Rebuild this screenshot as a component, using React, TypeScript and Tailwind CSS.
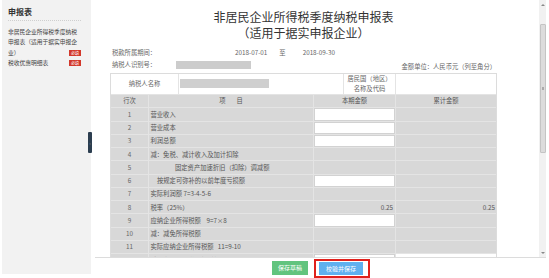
import React from "react";

type Row = { n: string; t: string; a: "w" | "g"; b?: "w" | "g"; v?: string; ind?: string };

const rows: Row[] = [
  { n: "1", t: "营业收入", a: "w" },
  { n: "2", t: "营业成本", a: "w" },
  { n: "3", t: "利润总额", a: "w" },
  { n: "4", t: "减：免税、减计收入及加计扣除", a: "g" },
  { n: "5", t: "固定资产加速折旧（扣除）调减额", a: "g", ind: "pl-[26px]" },
  { n: "6", t: "按规定可弥补的以前年度亏损额", a: "w", ind: "pl-[8px]" },
  { n: "7", t: "实际利润额 7=3-4-5-6", a: "g" },
  { n: "8", t: "税率（25%）", a: "g", v: "0.25" },
  { n: "9", t: "应纳企业所得税额\u00a0\u00a0\u00a0 9=7×8", a: "w" },
  { n: "10", t: "减：减免所得税额", a: "g" },
  { n: "11", t: "实际应纳企业所得税额\u00a0\u00a0 11=9-10", a: "g" },
  { n: "12", t: "减：实际已预缴所得税额", a: "w", b: "w" },
];

function Tag() {
  return (
    <span className="w-[12px] h-[6px] bg-[#d2382b] text-white text-[4px] leading-[6px] flex items-center justify-center shrink-0">
      必填
    </span>
  );
}

export default function App() {
  return (
    <div className="w-[549px] h-[278px] bg-white flex overflow-hidden relative font-['Noto_Sans_CJK_SC','Noto_Sans',sans-serif]">
      {/* Sidebar */}
      <div className="ml-[2px] w-[89px] h-[274px] bg-[#f2f2f2] pl-[6px] pr-[10px] pt-[7px] shrink-0">
        <div className="text-[8px] font-bold text-[#333] leading-[10px]">申报表</div>
        <div className="mt-[3px] border-t border-dotted border-[#cfcfcf]" />
        <div className="mt-[6px] text-[5.75px] leading-[10.4px] text-[#444]">
          <div className="whitespace-nowrap">非居民企业所得税季度纳税</div>
          <div className="whitespace-nowrap">申报表（适用于据实申报企</div>
          <div className="flex items-center justify-between">
            <span>业）</span>
            <Tag />
          </div>
          <div className="flex items-center justify-between">
            <span>税收优惠明细表</span>
            <Tag />
          </div>
        </div>
      </div>

      {/* collapse handle */}
      <div className="absolute left-[88px] top-[132px] w-[4px] h-[21px] bg-[#2c3e50] rounded-[1px] flex items-center justify-center">
        <span className="text-[4px] leading-none text-[#9fb0c0]">‹</span>
      </div>

      {/* Main */}
      <div className="ml-[4px] w-[451px] flex flex-col">
        <div className="h-[258px] flex border-b border-[#dcdcdc]">
          <div className="w-[444px] h-[257px] overflow-hidden pl-[15px]">
            <div className="w-[387px] pt-[9px]">
              <div className="text-center text-[12px] leading-[16px] text-[#333]">
                非居民企业所得税季度纳税申报表
              </div>
              <div className="text-center text-[12px] leading-[16px] text-[#333]">
                （适用于据实申报企业）
              </div>

              <div className="mt-[6px] h-[12px] flex items-center text-[6.3px] text-[#666] pl-[2px]">
                <span className="w-[123px]">税款所属期间：</span>
                <span>2018-07-01</span>
                <span className="ml-[12px]">至</span>
                <span className="ml-[17px]">2018-09-30</span>
              </div>
              <div className="h-[12px] flex items-center justify-between text-[6.3px] text-[#666] pl-[2px] pr-[1px]">
                <div className="flex items-center">
                  <span className="w-[64px]">纳税人识别号：</span>
                  <span className="w-[75px] h-[8px] bg-[#cccccc]" />
                </div>
                <span className="mt-[3px]">金额单位：人民币元（列至角分）</span>
              </div>

              {/* Table */}
              <div className="mt-[1.5px] w-[387px] border border-[#dcdcdc] bg-[#e4e4e4] flex flex-col gap-px text-[6.3px] text-[#555]">
                <div className="grid grid-cols-[67px_164px_51px_100px] gap-px h-[20.5px]">
                  <div className="bg-white flex items-center justify-center text-[#666]">纳税人名称</div>
                  <div className="bg-white flex items-center pl-px">
                    <span className="w-[89px] h-[9px] bg-[#cfcfcf]" />
                  </div>
                  <div className="bg-white flex flex-col items-center justify-center leading-[10px] text-[#666]">
                    <span>居民国（地区）</span>
                    <span>名称及代码</span>
                  </div>
                  <div className="bg-white" />
                </div>
                <div className="grid grid-cols-[37px_164px_81px_100px] gap-px">
                  <div className="h-[12.3px] bg-[#d8d8d8] flex items-center justify-center">行次</div>
                  <div className="h-[12.3px] bg-[#d8d8d8] flex items-center justify-center gap-[11px]">
                    <span>项</span>
                    <span>目</span>
                  </div>
                  <div className="h-[12.3px] bg-[#d8d8d8] flex items-center justify-center">本期金额</div>
                  <div className="h-[12.3px] bg-[#d8d8d8] flex items-center justify-center">累计金额</div>
                  {rows.map((r) => (
                    <React.Fragment key={r.n}>
                      <div className="h-[12.27px] bg-[#d8d8d8] flex items-center justify-center text-[#666]">{r.n}</div>
                      <div className={`h-[12.27px] bg-[#d8d8d8] flex items-center whitespace-nowrap ${r.ind ?? "pl-[1.5px]"}`}>
                        {r.t}
                      </div>
                      <div
                        className={`h-[12.27px] flex items-center justify-end pr-[2px] ${
                          r.a === "w" ? "bg-white border border-[#d2d2d2]" : "bg-[#d8d8d8]"
                        }`}
                      >
                        {r.v ?? ""}
                      </div>
                      <div
                        className={`h-[12.27px] flex items-center justify-end pr-[1px] ${
                          r.b === "w" ? "bg-white" : "bg-[#d8d8d8]"
                        }`}
                      >
                        {r.v ?? ""}
                      </div>
                    </React.Fragment>
                  ))}
                </div>
              </div>
            </div>
          </div>

          {/* Scrollbar */}
          <div className="w-[7px] h-[257px] bg-[#f1f1f1] flex flex-col items-center">
            <div className="h-[10px] flex items-center justify-center">
              <span className="w-0 h-0 border-l-[2px] border-r-[2px] border-b-[2px] border-l-transparent border-r-transparent border-b-[#888]" />
            </div>
            <div className="mt-[14px] w-[6px] h-[129px] bg-[#dcdcdc] border border-[#c4c4c4] rounded-[1px] flex items-center justify-center">
              <span className="w-[2px] h-[3px] bg-[#aaa]" />
            </div>
            <div className="flex-1" />
            <div className="h-[8px] flex items-center justify-center">
              <span className="w-0 h-0 border-l-[2px] border-r-[2px] border-t-[2px] border-l-transparent border-r-transparent border-t-[#888]" />
            </div>
          </div>
        </div>

        {/* Footer */}
        <div className="flex-1 flex items-center pl-[177px] gap-[6px]">
          <button className="w-[36px] h-[14px] bg-[#62c47e] text-white text-[6px] leading-none flex items-center justify-center">
            保存草稿
          </button>
          <div className="border-2 border-[#e0201c] pl-[3px] pr-[5px] py-[1px] mt-[1px]">
            <button className="w-[44px] h-[13px] bg-[#5fb0ef] text-white text-[6px] leading-none flex items-center justify-center">
              校验并保存
            </button>
          </div>
        </div>
      </div>
    </div>
  );
}
